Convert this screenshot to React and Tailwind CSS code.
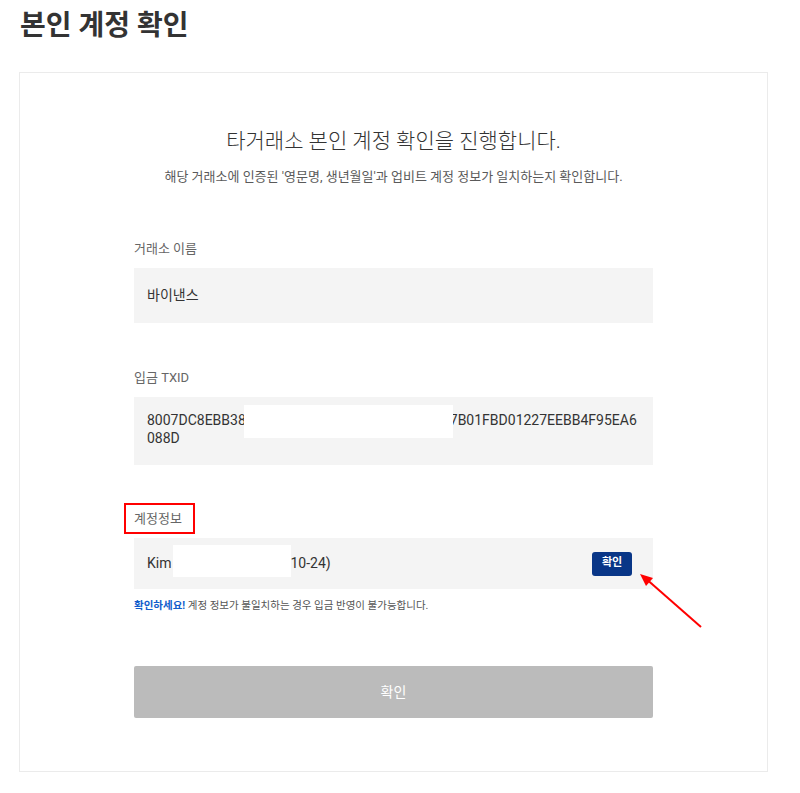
const font = {
  fontFamily: '"Roboto", "Noto Sans CJK KR", "Noto Sans", sans-serif',
};

// 빨간 화살표 (주석 표시)
const RedArrow = () => (
  <svg
    className="absolute left-[634px] top-[568px] pointer-events-none"
    width="74"
    height="66"
    viewBox="0 0 74 66"
  >
    <line x1="67" y1="59" x2="10" y2="9" stroke="#f00" strokeWidth="2" />
    <polygon points="6,6 19,10 12,18" fill="#f00" />
  </svg>
);

const Label = ({ children }) => (
  <div className="text-[13px] leading-[20px] text-[#666]">{children}</div>
);

export default function App() {
  return (
    <div className="relative w-[800px] min-h-[793px] bg-white" style={font}>
      <div className="pl-[20px] pt-[6px] text-[28px] leading-[40px] font-bold text-[#333]">
        본인 계정 확인
      </div>

      <div className="ml-[19px] mt-[26px] w-[749px] h-[700px] border border-[#ebebeb] pt-[53px]">
        <div className="text-center text-[21px] leading-[30px] font-light text-[#333]">
          타거래소 본인 계정 확인을 진행합니다.
        </div>
        <div className="mt-[11px] text-center text-[13px] leading-[20px] text-[#5a5a5a]">
          해당 거래소에 인증된 '영문명, 생년월일'과 업비트 계정 정보가 일치하는지 확인합니다.
        </div>

        <div className="mx-auto w-[519px] mt-[52px]">
          <Label>거래소 이름</Label>
          <div className="mt-[9px] h-[55px] bg-[#f4f4f4] px-[13px] flex items-center text-[14px] text-[#333]">
            바이낸스
          </div>

          <div className="mt-[45px]">
            <Label>입금 TXID</Label>
          </div>
          <div className="relative mt-[9px] h-[68px] bg-[#f4f4f4] pl-[13px] pt-[14px] text-[14px] leading-[18px] text-[#333]">
            <div className="flex whitespace-nowrap">
              <span>8007DC8EBB38</span>
              <span className="inline-block w-[204px]" />
              <span>7B01FBD01227EEBB4F95EA6</span>
            </div>
            <div>088D</div>
            <div className="absolute left-[110px] top-[8px] w-[209px] h-[33px] bg-white" />
          </div>

          <div className="relative mt-[44px]">
            <Label>계정정보</Label>
            <div className="absolute -left-[10px] -top-[6px] w-[71px] h-[31px] border-2 border-[#f00]" />
          </div>
          <div className="relative mt-[9px] h-[51px] bg-[#f4f4f4] pl-[13px] pr-[21px] flex items-center justify-between text-[14px] text-[#333]">
            <div className="flex whitespace-nowrap">
              <span>Kim</span>
              <span className="inline-block w-[119px]" />
              <span>10-24)</span>
            </div>
            <button className="w-[40px] h-[24px] rounded-[3px] bg-[#093687] text-white text-[11px] font-bold">
              확인
            </button>
            <div className="absolute left-[39px] top-[7px] w-[118px] h-[32px] bg-white" />
          </div>
          <div className="mt-[9px] text-[10.5px] leading-[16px] text-[#555]">
            <span className="font-bold text-[#115dcb]">확인하세요!</span> 계정 정보가 불일치하는 경우 입금 반영이 불가능합니다.
          </div>

          <button className="mt-[52px] w-full h-[52px] rounded-[2px] bg-[#bbbbbb] text-white text-[14px]">
            확인
          </button>
        </div>
      </div>

      <RedArrow />
    </div>
  );
}
